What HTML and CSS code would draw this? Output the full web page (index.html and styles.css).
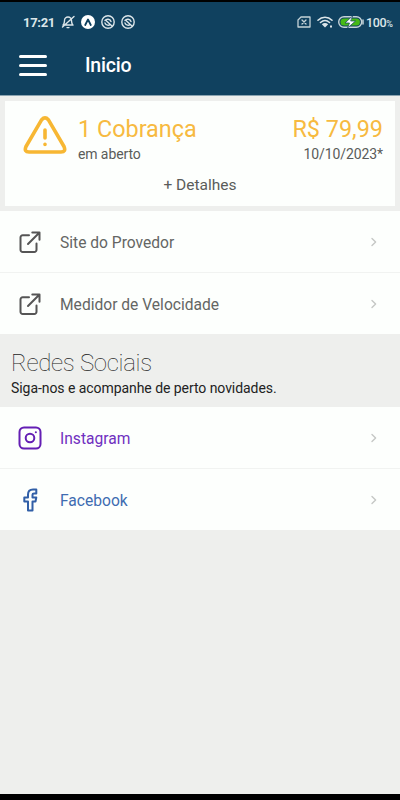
FILE: index.html
```html
<!DOCTYPE html>
<html lang="pt-BR">
<head>
<meta charset="utf-8">
<meta name="viewport" content="width=device-width, initial-scale=1">
<title>Inicio</title>
<link rel="stylesheet" href="styles.css">
</head>
<body>
<svg class="defs" width="0" height="0" aria-hidden="true">
  <symbol id="external" viewBox="0 0 24 24"><path d="M11 5.200H4.700A2.200 2.200 0 0 0 2.500 7.400V19.800A2.200 2.200 0 0 0 4.700 22H16.300A2.200 2.200 0 0 0 18.500 19.800V13.500M14.300 2.500H21.500V9.700M21 3L10 14"/></symbol>
  <symbol id="chevron" viewBox="0 0 6 10"><path d="M1 1.500l3.600 3.500L1 8.500"/></symbol>
  <symbol id="capture" viewBox="0 0 14 14"><circle cx="7" cy="7" r="6.200"/><path d="M4 5.500C5.500 3.500 9 3.800 10 6.500M4 8C5 10.500 8 10.800 9 9.500M5.500 6l5.500 5"/></symbol>
</svg>
<header class="header">
  <div class="status">
    <span class="clock">17:21</span>
    <div class="status-icons">
      <svg class="ico line" viewBox="0 0 14 14"><path d="M2 10c1.500-1 1.300-2 1.500-4.500a3.500 3.500 0 0 1 7 0c.200 2.500 0 3.500 1.500 4.500H3M6 12.600h2M13 1.500L1.500 12"/></svg>
      <svg class="ico" viewBox="0 0 14 14"><circle cx="7" cy="7" r="7" fill="#fff"/><path d="M4.200 10L7 4.500 9.800 10" fill="none" stroke="#10415f" stroke-width="1.800"/></svg>
      <svg class="ico line"><use href="#capture"/></svg>
      <svg class="ico line"><use href="#capture"/></svg>
    </div>
    <svg class="sim" viewBox="0 0 14 12"><path d="M4 1h9v10H1V4zM5 4l4 4M9 4L5 8"/></svg>
    <svg class="wifi" viewBox="0 0 16 12"><path d="M1 4.200C5 .300 11 .300 15 4.200M3.500 6.500c2.800-2.500 6.200-2.500 9 0"/><path class="solid" d="M4.800 8.200c2-1.700 4.400-1.700 6.400 0L8 11.500z"/><path class="solid" d="M13 9.500h2v2h-2z"/></svg>
    <svg class="battery" viewBox="0 0 26 12"><rect x=".700" y=".700" width="23" height="10.600" rx="5.300" fill="none" stroke="#c5d3d8" stroke-width="1.400"/><path d="M25 4v4" stroke="#c5d3d8" stroke-width="1.500"/><rect x="2.500" y="2.500" width="19.400" height="7" rx="3.500" fill="#46b916"/><path d="M14.500 0L7 7h4.500L9.500 12 17.500 5H13z" fill="#fff" stroke="#10415f" stroke-width=".700"/></svg>
    <span class="percent">100<small>%</small></span>
  </div>
  <div class="appbar">
    <div class="menu"><i></i><i></i><i></i></div>
    <h1>Inicio</h1>
  </div>
</header>
<main>
  <section class="card">
    <div class="bill">
      <svg class="warning" viewBox="0 0 44 38"><path d="M18.700 3.700L3 30.500Q.700 36 6 36H38Q43.300 36 41 30.500L25.300 3.700Q22 0 18.700 3.700ZM22 14v8M22 28.200v.200"/></svg>
      <div class="bill-name"><div class="big count">1 Cobrança</div><div class="small open">em aberto</div></div>
      <div class="bill-value"><div class="big amount">R$ 79,99</div><div class="small date">10/10/2023*</div></div>
    </div>
    <div class="details">+ Detalhes</div>
  </section>
  <nav class="list">
    <div class="row"><svg class="icon"><use href="#external"/></svg><span class="site">Site do Provedor</span><svg class="chev"><use href="#chevron"/></svg></div>
    <div class="row"><svg class="icon"><use href="#external"/></svg><span class="speed">Medidor de Velocidade</span><svg class="chev"><use href="#chevron"/></svg></div>
  </nav>
  <section class="social"><h2>Redes Sociais</h2><p>Siga-nos e acompanhe de perto novidades.</p></section>
  <nav class="list">
    <div class="row instagram"><svg class="icon" viewBox="0 0 24 24"><rect x="1.500" y="1.500" width="21" height="21" rx="4.500"/><circle cx="12" cy="12" r="4.300"/><path d="M17.800 6.200h.100"/></svg><span>Instagram</span><svg class="chev"><use href="#chevron"/></svg></div>
    <div class="row facebook"><svg class="icon" viewBox="0 0 24 24"><path d="M18.300 1.500H15Q10 1.500 10 6.500V9.500H6.300V13.500H10V22.500H14.500V13.500H17.500L18.300 9.500H14.500V6.800Q14.500 5.500 16 5.500H18.300Z"/></svg><span>Facebook</span><svg class="chev"><use href="#chevron"/></svg></div>
  </nav>
</main>
</body>
</html>
```
FILE: styles.css
```css
* { box-sizing: border-box; }
body {
  margin: 0;
  height: 800px;
  display: flex;
  flex-direction: column;
  overflow: hidden;
  font-family: Roboto, sans-serif;
  color: #646664;
  background: #eeefed;
  border-top: 2px solid #000;
  border-bottom: 6px solid #000;
}
.defs { position: absolute; }
svg { flex: none; fill: none; stroke-linecap: round; stroke-linejoin: round; }
h1, h2, p { margin: 0; }
.header { flex: none; height: 94px; background: #10415f; border-bottom: 1px solid #8ba4b1; color: #fff; }
.status { display: flex; align-items: center; height: 40px; padding: 0 8px 0 23px; color: #dce5e9; }
.clock { width: 38px; font-size: 13px; font-weight: 700; letter-spacing: -.3px; white-space: nowrap; }
.status-icons { display: flex; gap: 6px; flex: 1; margin-left: -.5px; }
.ico { width: 14px; height: 14px; }
.line { stroke: #dce5e9; stroke-width: 1.4; }
.sim { width: 14px; height: 12px; stroke: #c5d3d8; stroke-width: 1.3; margin-right: 6px; }
.wifi { width: 16px; height: 12px; stroke: #dce5e9; stroke-width: 1.6; margin-right: 5px; }
.wifi .solid { fill: #dce5e9; stroke: none; }
.battery { width: 26px; height: 12px; margin-right: 2px; }
.percent { width: 26px; font-size: 12.5px; font-weight: 500; white-space: nowrap; letter-spacing: -.4px; }
.percent small { font-size: 9px; }
.appbar { display: flex; align-items: center; height: 46px; padding-left: 19px; }
.menu { width: 28px; height: 21px; display: flex; flex-direction: column; justify-content: space-between; margin-right: 38px; }
.menu i { height: 3px; border-radius: 2px; background: #fff; }
h1 { font-size: 19.5px; font-weight: 500; line-height: 24px; letter-spacing: -.2px; padding-top: 2px; }
.card { height: 105px; margin: 5px; padding: 15px 12px 0 18px; background: #fdfffd; }
.bill { display: flex; height: 56px; }
.warning { width: 44px; height: 38px; stroke: #f7b733; stroke-width: 3.6; }
.bill-name { margin-left: 11px; flex: 1; }
.bill-value { text-align: right; }
.big { font-size: 23.4px; font-weight: 400; line-height: 27px; color: #f7ba40; white-space: nowrap; }
.small { font-size: 14px; line-height: 20px; margin-top: 1px; letter-spacing: -.1px; color: #5a5c5a; }
.details { font-size: 15.5px; line-height: 20px; margin-left: -6px; text-align: center; margin-top: 3px; color: #5a5c5a; }
.list { background: #fdfffd; }
.row { height: 61px; display: flex; align-items: center; padding: 1px 23px 0 18px; font-size: 15.6px; }
.row + .row { height: 62px; border-top: 1px solid #f1f3f1; }
.row span { flex: 1; padding-top: 2px; }
.icon { width: 24px; height: 24px; margin-right: 18px; stroke: #555; stroke-width: 2; }
.chev { width: 6px; height: 10px; stroke: #c5c7c5; stroke-width: 1.4; }
.social { height: 73px; padding: 14px 11px; color: #222; }
h2 { font-size: 24px; line-height: 30px; font-weight: 100; letter-spacing: -.3px; }
.social p { font-size: 14px; line-height: 20px; white-space: nowrap; letter-spacing: -.06px; }
.instagram { color: #7030c0; }
.instagram .icon { stroke: #641fb4; }
.facebook { color: #3f6cb1; }
.facebook .icon { stroke: #315fa7; }
```
